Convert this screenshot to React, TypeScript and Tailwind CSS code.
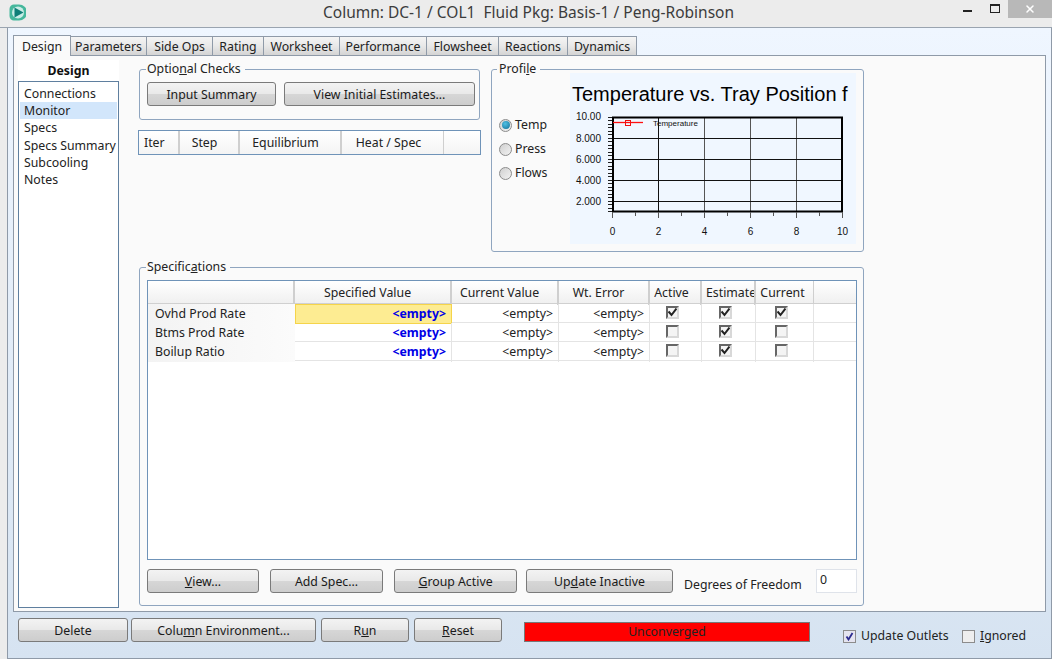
import React from 'react';
import { X } from 'lucide-react';

const tabs = [
  { label: 'Parameters', w: 'w-[76px]' },
  { label: 'Side Ops', w: 'w-[66px]' },
  { label: 'Rating', w: 'w-[51px]' },
  { label: 'Worksheet', w: 'w-[76px]' },
  { label: 'Performance', w: 'w-[87px]' },
  { label: 'Flowsheet', w: 'w-[72px]' },
  { label: 'Reactions', w: 'w-[69px]' },
  { label: 'Dynamics', w: 'w-[69px]' },
];

const specRows = [
  { name: 'Ovhd Prod Rate', active: true, estimate: true, current: true, selected: true },
  { name: 'Btms Prod Rate', active: false, estimate: true, current: false, selected: false },
  { name: 'Boilup Ratio', active: false, estimate: true, current: false, selected: false },
];

const Btn: React.FC<{ className: string; children: React.ReactNode }> = ({ className, children }) => (
  <button className={`h-[24px] shrink-0 rounded-[3px] border border-[#7a7a7a] bg-[linear-gradient(#f3f3f3_0%,#e9e9e9_48%,#d6d6d6_52%,#cdcdcd_100%)] pt-[1px] text-center text-[12.3px] leading-[20px] text-[#1a1a1a] ${className}`}>
    {children}
  </button>
);

const GridCheck: React.FC<{ on: boolean }> = ({ on }) => (
  <div className="flex h-full items-center justify-center pb-[4px] pr-[7px]">
    <div className="flex h-[13px] w-[13px] items-center justify-center border-2 border-b-[#d8d8d8] border-l-[#666] border-r-[#d8d8d8] border-t-[#666] bg-[#f4f4f4]">
      {on && (
        <svg width="9" height="9" viewBox="0 0 9 9">
          <path d="M0.5 3.5 L3.5 7 L8.5 0.5" fill="none" stroke="#222" strokeWidth="2" />
        </svg>
      )}
    </div>
  </div>
);

const Radio: React.FC<{ label: string; on?: boolean }> = ({ label, on }) => (
  <div className="flex h-[24px] items-center gap-[3px]">
    <div className="flex h-[13px] w-[13px] items-center justify-center rounded-full border border-[#8c8c8c] bg-[linear-gradient(135deg,#d0d0d0,#f2f2f2)]">
      {on && <div className="h-[8px] w-[8px] rounded-full bg-[radial-gradient(circle_at_40%_35%,#4fc0e4,#126e96)]" />}
    </div>
    <span>{label}</span>
  </div>
);

const Chart = () => {
  const xs = [612, 658, 704, 750, 796, 842];
  const ys = [138, 159, 180, 201];
  const ox = 570;
  const oy = 73;
  return (
    <svg width="286" height="171" viewBox={`${ox} ${oy} 286 171`} className="block">
      <rect x={ox} y={oy} width="286" height="171" fill="#f0f7ff" />
      <text x="572" y="101" fontSize="20" fontFamily="Liberation Sans" fill="#000">Temperature vs. Tray Position f</text>
      {xs.slice(1, -1).map((x) => (
        <line key={x} x1={x + 0.5} y1="117" x2={x + 0.5} y2="211" stroke={x > 700 ? '#555' : '#111'} />
      ))}
      {ys.map((y) => (
        <line key={y} x1="612" y1={y + 0.5} x2="842" y2={y + 0.5} stroke="#111" />
      ))}
      <rect x="613" y="117.5" width="229" height="94" fill="none" stroke="#000" strokeWidth="2" />
      {[117, 120, 124, 127, 131, 134, 138, 141, 145, 148, 152, 155, 159, 162, 166, 169, 173, 176, 180, 183, 187, 190, 194, 197, 201, 204, 208, 211].map((y) => (
        <line key={y} x1="608" y1={y + 0.5} x2="612" y2={y + 0.5} stroke="#222" />
      ))}
      {[612, 635, 658, 681, 704, 727, 750, 773, 796, 819, 842].map((x, i) => (
        <line key={x} x1={x + 0.5} y1="212" x2={x + 0.5} y2={i % 2 === 0 ? 218 : 216} stroke="#555" />
      ))}
      {[
        ['10.00', 120],
        ['8.000', 142],
        ['6.000', 163],
        ['4.000', 184],
        ['2.000', 205],
      ].map(([t, y]) => (
        <text key={t} x="601" y={y} textAnchor="end" fontSize="10" fontFamily="Liberation Sans" fill="#111">{t}</text>
      ))}
      {xs.map((x, i) => (
        <text key={x} x={x + 0.5} y="235" textAnchor="middle" fontSize="10" fontFamily="Liberation Sans" fill="#111">{i * 2}</text>
      ))}
      <line x1="613" y1="122.5" x2="643" y2="122.5" stroke="#ff1010" strokeWidth="1.3" />
      <rect x="625.5" y="120.5" width="5" height="5" fill="none" stroke="#f01010" />
      <text x="653" y="126" fontSize="8" fontFamily="Liberation Sans" fill="#111">Temperature</text>
    </svg>
  );
};

const App: React.FC = () => {
  return (
    <div className="flex h-[659px] w-[1052px] flex-col overflow-hidden bg-[#ececec] font-['Noto_Sans',sans-serif] text-[12.3px] text-[#222]">
      {/* title bar */}
      <div className="relative flex h-[28px] shrink-0 items-center justify-center border-b border-[#9aa4b0] pb-[2px] pl-[5px]">
        <svg width="17" height="17" viewBox="0 0 17 17" className="absolute left-[9px] top-[4px]">
          <path d="M5 0.5 H10 A7 7 0 0 1 10 16.5 H5 A4.5 4.5 0 0 1 0.5 12 V5 A4.5 4.5 0 0 1 5 0.5 Z" fill="#45b79c" />
          <circle cx="9" cy="8.5" r="6" fill="#c9ece6" />
          <path d="M5.5 3.5 L14.5 8.5 L5.5 13.5 Z" fill="#0f7f78" />
        </svg>
        <span className="text-[15.5px] text-[#3c3c3c]">Column: DC-1 / COL1&nbsp; Fluid Pkg: Basis-1 / Peng-Robinson</span>
        <div className="absolute right-0 top-0 flex items-start">
          <div className="mr-[18px] mt-[10px] h-[2px] w-[9px] bg-[#222]" />
          <div className="mr-[8px] mt-[4px] h-[9px] w-[10px] border border-t-2 border-[#222]" />
          <div className="flex h-[18px] w-[44px] items-center justify-center bg-[#b8b8b8]">
            <X size={12} strokeWidth={3} className="text-white" />
          </div>
        </div>
      </div>

      {/* window body */}
      <div className="ml-[7px] flex flex-1 flex-col border-x border-b border-[#8f9aa8] bg-[linear-gradient(#eff6ff,#d6e3f1)] pl-[5px] pr-[5px] pt-[6px]">
        <div className="flex h-[21px] shrink-0 items-end">
          <div className="relative z-10 -mb-px flex h-[21px] w-[58px] items-center justify-center border border-b-0 border-[#8f9aa8] bg-[#fafafa] pt-[2px]">Design</div>
          {tabs.map((t) => (
            <div key={t.label} className={`flex h-[19px] items-center justify-center border border-b-0 border-l-0 border-[#8f9aa8] bg-[linear-gradient(#f5f5f5,#e8e8e8_50%,#d4d4d4)] pt-[2px] ${t.w}`}>
              {t.label}
            </div>
          ))}
        </div>

        {/* tab page */}
        <div className="flex h-[557px] shrink-0 border border-[#8f9aa8] bg-[#fafafa] pl-[4px] pt-[4px]">
          {/* left nav */}
          <div className="flex h-[548px] w-[101px] shrink-0 flex-col">
            <div className="flex h-[21px] items-center justify-center bg-white pt-[2px] font-bold text-[#111]">Design</div>
            <div className="flex-1 border border-[#5f7f9f] bg-white px-[1px] pt-[3px] leading-[17.2px]">
              {['Connections', 'Monitor', 'Specs', 'Specs Summary', 'Subcooling', 'Notes'].map((n) => (
                <div key={n} className={n === 'Monitor' ? 'whitespace-nowrap bg-[#d2e6fb] pl-[4px]' : 'whitespace-nowrap pl-[4px]'}>{n}</div>
              ))}
            </div>
          </div>

          {/* right content */}
          <div className="ml-[19px] w-[726px] pt-[1px]">
            <div className="flex">
              <div className="w-[343px]">
                <fieldset className="ml-[1px] h-[59px] w-[341px] min-w-0 rounded-[3px] border border-[#8fa5bf] pl-[7px]">
                  <legend className="ml-[-1px] px-[1px] pr-[4px] leading-[16px]">Optio<u>n</u>al Checks</legend>
                  <div className="mt-[5px] flex gap-[8px]">
                    <Btn className="w-[129px]">Input Summary</Btn>
                    <Btn className="w-[191px]">View Initial Estimates...</Btn>
                  </div>
                </fieldset>
                <div className="mt-[10px] grid h-[25px] w-[343px] grid-cols-[41px_60px_102px_102px_1fr] border border-[#6f93b8] bg-[linear-gradient(#ffffff,#f4f4f4)] text-center">
                  <div className="border-r-2 border-[#cfcfcf] pl-[5px] text-left leading-[23px]">Iter</div>
                  <div className="border-r-2 border-[#cfcfcf] pr-[9px] leading-[23px]">Step</div>
                  <div className="border-r-2 border-[#cfcfcf] pr-[9px] leading-[23px]">Equilibrium</div>
                  <div className="border-r border-[#cfcfcf] pr-[8px] leading-[23px]">Heat / Spec</div>
                  <div />
                </div>
              </div>
              <fieldset className="ml-[10px] h-[191px] w-[374px] min-w-0 rounded-[3px] border border-[#8fa5bf]">
                <legend className="ml-[5px] px-[2px] pr-[4px] leading-[16px]">Profi<u>l</u>e</legend>
                <div className="flex">
                  <div className="ml-[7px] mt-[36px] w-[71px]">
                    <Radio label="Temp" on />
                    <Radio label="Press" />
                    <Radio label="Flows" />
                  </div>
                  <div className="-mt-[4px]"><Chart /></div>
                </div>
              </fieldset>
            </div>

            {/* specifications */}
            <fieldset className="ml-[1px] mt-[7px] h-[347px] w-[725px] min-w-0 rounded-[3px] border border-[#8fa5bf] pl-[7px] pr-[6px]">
              <legend className="ml-[-1px] px-[1px] pr-[4px] leading-[16px]">Specific<u>a</u>tions</legend>
              <div className="mt-[5px] h-[280px] border border-[#6f93b8] bg-white">
                <div className="grid h-[23px] grid-cols-[147px_157px_107px_91px_52px_54px_58px_1fr] border-b border-[#d0d0d0] bg-[linear-gradient(#ffffff,#f0f0f0)] text-center leading-[24px]">
                  <div className="border-r-2 border-[#cfcfcf]" />
                  <div className="border-r-2 border-[#cfcfcf] pr-[10px]">Specified Value</div>
                  <div className="border-r-2 border-[#cfcfcf] pr-[10px]">Current Value</div>
                  <div className="border-r-2 border-[#cfcfcf] pr-[10px]">Wt. Error</div>
                  <div className="border-r-2 border-[#cfcfcf] pr-[7px]">Active</div>
                  <div className="overflow-hidden whitespace-nowrap border-r-2 border-[#cfcfcf] pl-[4px] text-left">Estimate</div>
                  <div className="border-r border-[#cfcfcf] pr-[4px]">Current</div>
                  <div />
                </div>
                {specRows.map((r) => (
                  <div key={r.name} className="grid h-[19px] grid-cols-[147px_157px_107px_91px_52px_54px_58px_1fr] border-b border-[#e4e4e4] leading-[20px]">
                    <div className="bg-[linear-gradient(90deg,#f3f3f3,#fbfbfb)] pl-[7px]">{r.name}</div>
                    <div className={`pr-[5px] text-right font-bold text-[#0000e6] ${r.selected ? 'border border-[#f5d44a] bg-[#fdec92] leading-[18px]' : 'border-r border-[#e4e4e4]'}`}>&lt;empty&gt;</div>
                    <div className="border-r border-[#e4e4e4] pr-[5px] text-right">&lt;empty&gt;</div>
                    <div className="border-r border-[#e4e4e4] pr-[5px] text-right">&lt;empty&gt;</div>
                    <div className="border-r border-[#e4e4e4]"><GridCheck on={r.active} /></div>
                    <div className="border-r border-[#e4e4e4]"><GridCheck on={r.estimate} /></div>
                    <div className="border-r border-[#e4e4e4]"><GridCheck on={r.current} /></div>
                    <div />
                  </div>
                ))}
              </div>
              <div className="mt-[9px] flex items-start">
                <Btn className="w-[112px]"><u>V</u>iew...</Btn>
                <Btn className="ml-[11px] w-[113px]">Add Spec...</Btn>
                <Btn className="ml-[11px] w-[123px]"><u>G</u>roup Active</Btn>
                <Btn className="ml-[9px] w-[147px]">Up<u>d</u>ate Inactive</Btn>
                <span className="ml-[11px] mt-[7px] w-[132px] whitespace-nowrap">Degrees of Freedom</span>
                <div className="h-[24px] w-[41px] border border-[#dfe3ea] bg-white pl-[3px] leading-[20px]">0</div>
              </div>
            </fieldset>
          </div>
        </div>

        {/* bottom bar */}
        <div className="mt-[6px] flex items-start pl-[5px]">
          <Btn className="w-[110px]">Delete</Btn>
          <Btn className="ml-[3px] w-[185px]">Colu<u>m</u>n Environment...</Btn>
          <Btn className="ml-[5px] w-[88px]">R<u>u</u>n</Btn>
          <Btn className="ml-[5px] w-[88px]"><u>R</u>eset</Btn>
          <div className="ml-[22px] mt-[4px] h-[20px] w-[286px] border border-[#777] bg-[#ff0000] text-center leading-[17px]">Unconverged</div>
          <div className="ml-[33px] mt-[9px] flex items-center">
            <div className="flex h-[13px] w-[13px] items-center justify-center border border-[#8c8c8c] bg-[#e4e4f0]">
              <svg width="9" height="9" viewBox="0 0 9 9"><path d="M1.5 4.5 L3.5 7.5 L7.5 1" fill="none" stroke="#2b2b8f" strokeWidth="1.8" /></svg>
            </div>
            <span className="ml-[5px] w-[101px]">Update Outlets</span>
            <div className="h-[13px] w-[13px] border border-[#8c8c8c] bg-[#eeeeee]" />
            <span className="ml-[5px]"><u>I</u>gnored</span>
          </div>
        </div>
      </div>
    </div>
  );
};

export default App;
